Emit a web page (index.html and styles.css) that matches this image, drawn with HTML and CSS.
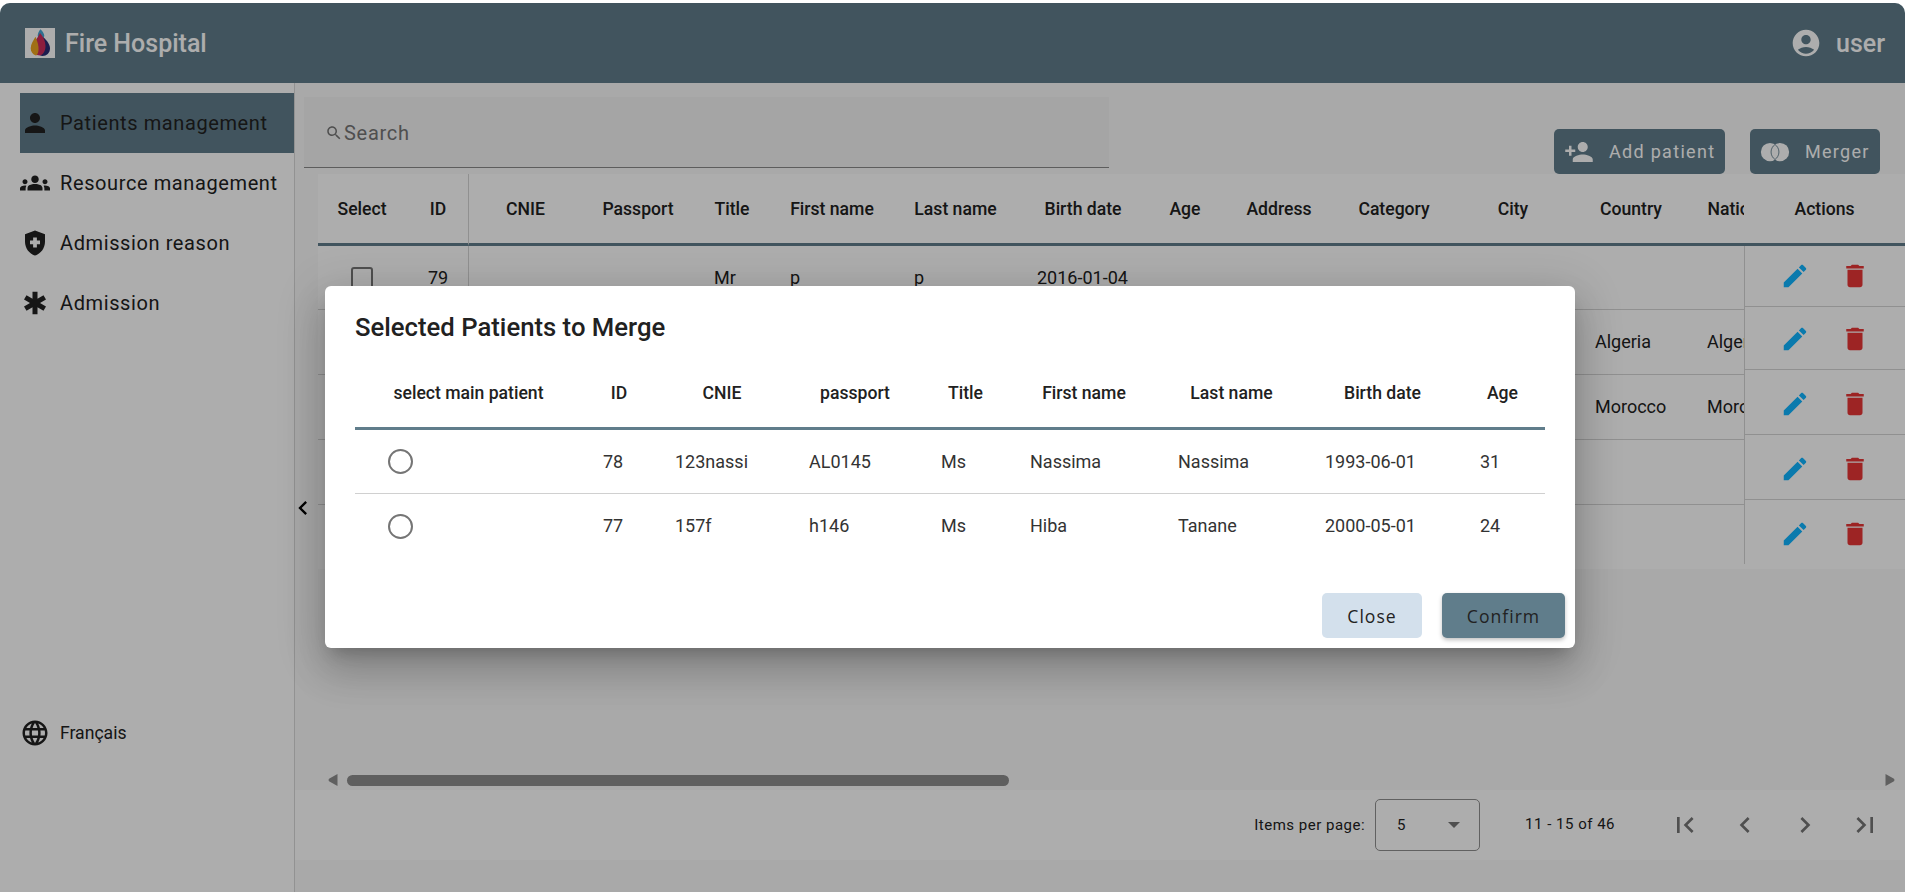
FILE: index.html
```html
<!DOCTYPE html>
<html lang="en">

<head>
  <meta charset="UTF-8">
  <meta name="viewport" content="width=device-width, initial-scale=1.0">
  <title>Fire Hospital</title>
  <link rel="stylesheet" href="styles.css">
</head>

<body>
  <svg class="sprite" aria-hidden="true">
    <symbol id="i-edit" viewBox="0 0 24 24"><path d="M3 17.25V21h3.75L17.81 9.94l-3.75-3.75L3 17.25zM20.71 7.04c.39-.39.39-1.02 0-1.41l-2.34-2.34c-.39-.39-1.02-.39-1.41 0l-1.83 1.83 3.75 3.75 1.83-1.83z"/></symbol>
    <symbol id="i-delete" viewBox="0 0 24 24"><path d="M6 19c0 1.1.9 2 2 2h8c1.1 0 2-.9 2-2V7H6v12zM19 4h-3.5l-1-1h-5l-1 1H5v2h14V4z"/></symbol>
  </svg>

  <div class="app">
    <header class="topbar">
      <div class="brand">
        <svg class="logo" viewBox="0 0 30 30">
          <rect width="30" height="30" fill="#fff"/>
          <path d="M15.500 1.300c2 2 3.800 4.500 3.800 6.500 0 1.500-1.500 2.700-3.300 2.700s-3.300-1.200-3.300-2.700c0-2 1-4.500 2.800-6.500z" fill="#46a5d6"/>
          <path d="M18 9c4 3.500 7 7.500 7 11.500 0 4.500-3.500 7.500-7.500 7.500-2 0-3.500-1-3.500-3z" fill="#2a2c74"/>
          <path d="M15 5c3.500 4 5.500 8.500 5.500 13 0 4.500-2 8.500-5.500 9.500-4 0-7-3-7-7.500 0-5.500 4.500-9.500 7-15z" fill="#cf2c5c"/>
          <path d="M10.500 8.700c1.800 4.500 3.500 9 3 13.500-.3 2.800-1.300 4.800-2.500 5.300-3.300-1-5.300-3.800-5.300-7.200 0-4.300 2.800-7.800 4.800-11.600z" fill="#ecA41f"/>
        </svg>
        <span class="brand-name">Fire Hospital</span>
      </div>
      <div class="user">
        <svg class="user-icon" viewBox="0 0 24 24"><path d="M12 2C6.480 2 2 6.480 2 12s4.480 10 10 10 10-4.480 10-10S17.520 2 12 2zm0 4c1.930 0 3.500 1.570 3.500 3.500S13.930 13 12 13s-3.500-1.570-3.500-3.500S10.070 6 12 6zm0 14c-2.030 0-4.430-.820-6.140-2.880C7.550 15.800 9.680 15 12 15s4.450.800 6.140 2.120C16.430 19.180 14.030 20 12 20z"/></svg>
        <span>user</span>
      </div>
    </header>

    <div class="content">
      <aside class="sidebar">
        <nav class="nav">
          <a class="nav-item active">
            <svg class="nav-icon" viewBox="0 0 24 24"><path d="M12 12c2.210 0 4-1.790 4-4s-1.790-4-4-4-4 1.790-4 4 1.790 4 4 4zm0 2c-2.670 0-8 1.340-8 4v2h16v-2c0-2.660-5.330-4-8-4z"/></svg>
            Patients management
          </a>
          <a class="nav-item">
            <svg class="nav-icon" viewBox="0 0 24 24"><path d="M12 12.750c1.630 0 3.070.390 4.240.900 1.080.480 1.760 1.560 1.760 2.730V18H6v-1.610c0-1.180.680-2.260 1.760-2.730 1.170-.520 2.610-.910 4.240-.910zM4 13c1.100 0 2-.900 2-2s-.900-2-2-2-2 .900-2 2 .900 2 2 2zm1.130 1.100c-.370-.060-.740-.100-1.130-.100-.990 0-1.930.210-2.780.580C.480 14.900 0 15.620 0 16.430V18h4.500v-1.610c0-.830.230-1.610.630-2.290zM20 13c1.100 0 2-.900 2-2s-.900-2-2-2-2 .900-2 2 .900 2 2 2zm4 3.430c0-.810-.480-1.530-1.220-1.850-.850-.370-1.790-.580-2.780-.580-.390 0-.760.040-1.130.100.400.680.630 1.460.630 2.290V18H24v-1.570zM12 12c1.660 0 3-1.340 3-3s-1.340-3-3-3-3 1.340-3 3 1.340 3 3 3z"/></svg>
            Resource management
          </a>
          <a class="nav-item">
            <svg class="nav-icon" viewBox="0 0 24 24"><path fill-rule="evenodd" d="M10.500 13H8v-3h2.500V7.500h3V10H16v3h-2.500v2.500h-3V13zM12 2 4 5v6.090c0 5.050 3.410 9.760 8 10.910 4.590-1.150 8-5.860 8-10.910V5l-8-3z"/></svg>
            Admission reason
          </a>
          <a class="nav-item">
            <svg class="nav-icon" viewBox="0 0 24 24"><path d="M20.790 9.230l-2-3.460L14 8.540V3h-4v5.540L5.210 5.770l-2 3.460L8 12l-4.790 2.770 2 3.460L10 15.460V21h4v-5.540l4.790 2.770 2-3.460L16 12z"/></svg>
            Admission
          </a>
        </nav>
        <a class="lang">
          <svg class="nav-icon" viewBox="0 0 24 24"><path d="M11.990 2C6.470 2 2 6.480 2 12s4.470 10 9.990 10C17.520 22 22 17.520 22 12S17.520 2 11.990 2zm6.930 6h-2.950c-.320-1.250-.780-2.450-1.380-3.560 1.840.630 3.370 1.910 4.330 3.560zM12 4.040c.830 1.200 1.480 2.530 1.910 3.960h-3.820c.430-1.430 1.080-2.760 1.910-3.960zM4.260 14C4.100 13.360 4 12.690 4 12s.100-1.360.260-2h3.380c-.080.660-.140 1.320-.140 2 0 .680.060 1.340.140 2H4.260zm.820 2h2.950c.320 1.250.780 2.450 1.380 3.560-1.840-.630-3.370-1.900-4.330-3.560zm2.950-8H5.080c.960-1.660 2.490-2.930 4.330-3.560C8.810 5.550 8.350 6.750 8.030 8zM12 19.960c-.830-1.200-1.480-2.530-1.910-3.960h3.820c-.430 1.430-1.080 2.760-1.910 3.960zM14.340 14H9.660c-.090-.660-.160-1.320-.160-2 0-.680.070-1.350.160-2h4.680c.090.650.160 1.320.160 2 0 .680-.070 1.340-.160 2zm.250 5.560c.600-1.110 1.060-2.310 1.380-3.560h2.950c-.960 1.650-2.490 2.930-4.330 3.560zM16.360 14c.080-.660.140-1.320.140-2 0-.680-.060-1.340-.140-2h3.380c.160.640.260 1.310.260 2s-.100 1.360-.260 2h-3.380z"/></svg>
          Français
        </a>
      </aside>

      <main class="main">
        <svg class="collapse" viewBox="0 0 24 24"><path d="M15.410 7.410 14 6l-6 6 6 6 1.410-1.410L10.830 12z"/></svg>

        <div class="toolbar">
          <div class="search">
            <svg class="search-icon" viewBox="0 0 24 24"><path d="M15.500 14h-.790l-.280-.270C15.410 12.590 16 11.110 16 9.500 16 5.910 13.090 3 9.500 3S3 5.910 3 9.500 5.910 16 9.500 16c1.610 0 3.090-.590 4.230-1.570l.270.280v.790l5 4.990L20.490 19l-4.990-5zm-6 0C7.010 14 5 11.990 5 9.500S7.010 5 9.500 5 14 7.010 14 9.500 11.990 14 9.500 14z"/></svg>
            <span>Search</span>
          </div>
          <div class="toolbar-actions">
            <button class="btn-add">
              <svg class="btn-icon" viewBox="0 0 24 24"><path d="M15 12c2.210 0 4-1.790 4-4s-1.790-4-4-4-4 1.790-4 4 1.790 4 4 4zm-9-2V7H4v3H1v2h3v3h2v-3h3v-2H6zm9 4c-2.670 0-8 1.340-8 4v2h16v-2c0-2.660-5.330-4-8-4z"/></svg>
              <span>Add patient</span>
            </button>
            <button class="btn-merge">
              <svg class="btn-icon" viewBox="0 0 24 24">
                <circle cx="8" cy="12" r="7.300"/>
                <circle cx="16" cy="12" r="7.300"/>
                <path class="lens" d="M12 6A7.300 7.300 0 0 1 12 18 7.300 7.300 0 0 1 12 6z"/>
              </svg>
              <span>Merger</span>
            </button>
          </div>
        </div>

        <div class="table-area">
          <div class="table-scroll">
            <table class="patients">
              <colgroup>
                <col class="c-select"><col class="c-id"><col class="c-cnie"><col class="c-passport"><col class="c-title">
                <col class="c-first"><col class="c-last"><col class="c-birth"><col class="c-age"><col class="c-address">
                <col class="c-category"><col class="c-city"><col class="c-country"><col class="c-nation">
              </colgroup>
              <thead>
                <tr>
                  <th class="flush">Select</th>
                  <th class="flush id-head sticky-end">ID</th>
                  <th class="cnie-head">CNIE</th>
                  <th>Passport</th>
                  <th>Title</th>
                  <th>First name</th>
                  <th>Last name</th>
                  <th>Birth date</th>
                  <th>Age</th>
                  <th>Address</th>
                  <th>Category</th>
                  <th>City</th>
                  <th>Country</th>
                  <th>Nationality</th>
                </tr>
              </thead>
              <tbody>
                <tr class="first-row">
                  <td class="center"><span class="checkbox"></span></td>
                  <td class="center sticky-end">79</td>
                  <td></td><td></td>
                  <td>Mr</td><td>p</td><td>p</td><td>2016-01-04</td>
                  <td></td><td></td><td></td><td></td><td></td><td></td>
                </tr>
                <tr>
                  <td></td><td class="sticky-end"></td>
                  <td></td><td></td><td></td><td></td><td></td><td></td><td></td><td></td><td></td><td></td>
                  <td>Algeria</td><td>Algerian</td>
                </tr>
                <tr>
                  <td></td><td class="sticky-end"></td>
                  <td></td><td></td><td></td><td></td><td></td><td></td><td></td><td></td><td></td><td></td>
                  <td>Morocco</td><td>Moroccan</td>
                </tr>
                <tr>
                  <td></td><td class="sticky-end"></td>
                  <td></td><td></td><td></td><td></td><td></td><td></td><td></td><td></td><td></td><td></td><td></td><td></td>
                </tr>
                <tr class="last-row">
                  <td></td><td class="sticky-end"></td>
                  <td></td><td></td><td></td><td></td><td></td><td></td><td></td><td></td><td></td><td></td><td></td><td></td>
                </tr>
              </tbody>
            </table>
          </div>

          <div class="actions-col">
            <div class="actions-head">Actions</div>
            <div class="action-row row-a">
              <svg class="act-edit"><use href="#i-edit"/></svg>
              <svg class="act-delete"><use href="#i-delete"/></svg>
            </div>
            <div class="action-row row-b">
              <svg class="act-edit"><use href="#i-edit"/></svg>
              <svg class="act-delete"><use href="#i-delete"/></svg>
            </div>
            <div class="action-row">
              <svg class="act-edit"><use href="#i-edit"/></svg>
              <svg class="act-delete"><use href="#i-delete"/></svg>
            </div>
            <div class="action-row">
              <svg class="act-edit"><use href="#i-edit"/></svg>
              <svg class="act-delete"><use href="#i-delete"/></svg>
            </div>
            <div class="action-row row-last">
              <svg class="act-edit"><use href="#i-edit"/></svg>
              <svg class="act-delete"><use href="#i-delete"/></svg>
            </div>
          </div>
        </div>

        <div class="hscroll">
          <svg class="arrow" viewBox="0 0 10 12"><path d="M9.500 0v12L1 7.200Q0 6 1 4.800z"/></svg>
          <div class="thumb"></div>
          <svg class="arrow arrow-end" viewBox="0 0 10 12"><path d="M.5 0v12L9 7.200Q10 6 9 4.800z"/></svg>
        </div>

        <div class="paginator">
          <span class="per-page">Items per page:</span>
          <div class="page-select"><span>5</span><i class="caret"></i></div>
          <span class="range">11 - 15 of 46</span>
          <svg class="page-btn" viewBox="0 0 24 24"><path d="M18.410 16.590 13.820 12l4.590-4.590L17 6l-6 6 6 6zM6 6h2v12H6z"/></svg>
          <svg class="page-btn" viewBox="0 0 24 24"><path d="M15.410 7.410 14 6l-6 6 6 6 1.410-1.410L10.830 12z"/></svg>
          <svg class="page-btn" viewBox="0 0 24 24"><path d="M10 6 8.590 7.410 13.170 12l-4.580 4.590L10 18l6-6z"/></svg>
          <svg class="page-btn" viewBox="0 0 24 24"><path d="M5.590 7.410 10.180 12l-4.590 4.590L7 18l6-6-6-6zM16 6h2v12h-2z"/></svg>
        </div>
      </main>
    </div>

    <div class="overlay">
      <div class="modal">
        <div class="modal-body">
          <h2 class="modal-title">Selected Patients to Merge</h2>
          <table class="merge-table">
            <colgroup>
              <col class="m-main"><col class="m-id"><col class="m-cnie"><col class="m-passport"><col class="m-title">
              <col class="m-first"><col class="m-last"><col class="m-birth"><col class="m-age">
            </colgroup>
            <thead>
              <tr>
                <th>select main patient</th>
                <th>ID</th>
                <th>CNIE</th>
                <th>passport</th>
                <th>Title</th>
                <th>First name</th>
                <th>Last name</th>
                <th>Birth date</th>
                <th>Age</th>
              </tr>
            </thead>
            <tbody>
              <tr>
                <td class="radio-cell"><span class="radio"></span></td>
                <td>78</td><td>123nassi</td><td>AL0145</td><td>Ms</td><td>Nassima</td><td>Nassima</td><td>1993-06-01</td><td>31</td>
              </tr>
              <tr>
                <td class="radio-cell"><span class="radio"></span></td>
                <td>77</td><td>157f</td><td>h146</td><td>Ms</td><td>Hiba</td><td>Tanane</td><td>2000-05-01</td><td>24</td>
              </tr>
            </tbody>
          </table>
        </div>
        <div class="modal-footer">
          <button class="btn-close">Close</button>
          <button class="btn-confirm">Confirm</button>
        </div>
      </div>
    </div>
  </div>
</body>

</html>
```

FILE: styles.css
```css
* {
  box-sizing: border-box;
}

html,
body {
  height: 100%;
}

body {
  margin: 0;
  padding: 3px 3px 0 0;
  background-color: #fff;
  color: #212121;
  font-family: Roboto, "Liberation Sans", sans-serif;
  overflow: hidden;
}

.sprite {
  display: none;
}

svg {
  fill: currentColor;
  flex-shrink: 0;
}

.app {
  position: relative;
  display: flex;
  flex-direction: column;
  height: 889px;
  overflow: hidden;
  border-radius: 10px 10px 0 0;
  background-color: #fff;
}

/* top bar */
.topbar {
  display: flex;
  align-items: center;
  justify-content: space-between;
  height: 80px;
  padding: 0 20px 0 25px;
  background-color: #607d8b;
  color: #fff;
  font-size: 25px;
  font-weight: 500;
}

.brand {
  display: flex;
  align-items: center;
  gap: 10px;
}

.logo {
  width: 30px;
  height: 30px;
}

.user {
  display: flex;
  align-items: center;
  gap: 14px;
}

.user-icon {
  width: 32px;
  height: 32px;
}

/* side menu */
.content {
  display: flex;
  flex: 1;
  min-height: 0;
}

.sidebar {
  display: flex;
  flex-direction: column;
  width: 295px;
  padding-top: 10px;
  border-right: 1px solid #d8d8d8;
}

.nav-item {
  display: flex;
  align-items: center;
  gap: 10px;
  height: 60px;
  margin-left: 20px;
  font-size: 20px;
  letter-spacing: 0.6px;
}

.nav-item.active {
  background-color: #607d8b;
}

.nav-icon {
  width: 30px;
  height: 30px;
}

.lang {
  display: flex;
  align-items: center;
  gap: 10px;
  margin: auto 0 144px 20px;
  font-size: 17.6px;
}

/* main area */
.main {
  position: relative;
  display: flex;
  flex: 1;
  flex-direction: column;
  min-width: 0;
  background-color: #fafafa;
}

.collapse {
  position: absolute;
  left: -6px;
  top: 411px;
  width: 28px;
  height: 28px;
  color: #000;
}

.toolbar {
  display: flex;
  justify-content: space-between;
  height: 91px;
  padding-left: 9px;
}

.search {
  display: flex;
  align-items: center;
  width: 805px;
  height: 71px;
  margin-top: 14px;
  padding: 2px 0 0 21px;
  background-color: #f3f3f3;
  border-bottom: 1px solid #8a8a8a;
  color: #757575;
  font-size: 20px;
  letter-spacing: 0.7px;
}

.search-icon {
  width: 18px;
  height: 18px;
  margin-right: 1px;
}

.toolbar-actions {
  display: flex;
  gap: 25px;
  margin-top: 46px;
  padding-right: 25px;
}

.toolbar-actions button {
  display: flex;
  align-items: center;
  height: 45px;
  padding: 0 10px;
  gap: 15px;
  border: none;
  border-radius: 5px;
  background-color: #607d8b;
  color: #fff;
  font-family: Roboto, sans-serif;
  font-size: 18px;
  letter-spacing: 1.3px;
  white-space: nowrap;
}

.btn-add {
  width: 171px;
}

.btn-merge {
  width: 130px;
}

.btn-icon {
  width: 30px;
  height: 30px;
}

.lens {
  fill: #fff;
  stroke: #607d8b;
  stroke-width: 0.7;
}

/* patients table */
.table-area {
  display: flex;
  height: 395px;
  margin-left: 23px;
  overflow: hidden;
  background-color: #fff;
}

.table-scroll {
  width: 1426px;
  overflow: hidden;
}

table {
  border-collapse: separate;
  border-spacing: 0;
  table-layout: fixed;
}

.patients {
  width: 1499px;
  font-size: 18px;
}

.c-select { width: 88px; }
.c-id { width: 63px; }
.c-cnie { width: 117px; }
.c-passport { width: 112px; }
.c-title { width: 76px; }
.c-first { width: 124px; }
.c-last { width: 123px; }
.c-birth { width: 132px; }
.c-age { width: 72px; }
.c-address { width: 116px; }
.c-category { width: 114px; }
.c-city { width: 124px; }
.c-country { width: 112px; }
.c-nation { width: 126px; }

.patients th {
  height: 72px;
  padding: 0 8px 0 0;
  border-bottom: 3px solid #607d8b;
  font-size: 17.6px;
  font-weight: 500;
  text-align: center;
  white-space: nowrap;
}

.patients th.flush {
  padding-right: 0;
}

.patients th.id-head {
  padding-left: 2px;
}

.patients th.cnie-head {
  padding-right: 4px;
}

.patients td {
  height: 65px;
  padding: 0 0 2px 16px;
  border-bottom: 1px solid #d4d4d4;
  white-space: nowrap;
  overflow: hidden;
}

.patients .first-row td {
  height: 64px;
  padding-bottom: 0;
}

.patients .last-row td {
  height: 64px;
  border-bottom: none;
}

.patients td.center {
  padding: 0 0 0 2px;
  text-align: center;
}

.sticky-end {
  border-right: 1px solid #d4d4d4;
}

.checkbox {
  display: inline-block;
  width: 22px;
  height: 22px;
  margin-left: -2px;
  border: 2px solid #757575;
  border-radius: 3px;
  vertical-align: middle;
}

.actions-col {
  width: 161px;
}

.actions-head {
  display: flex;
  align-items: center;
  justify-content: center;
  height: 72px;
  border-bottom: 3px solid #607d8b;
  font-size: 17.6px;
  font-weight: 500;
}

.action-row {
  display: flex;
  justify-content: center;
  gap: 30px;
  height: 65px;
  padding-top: 19px;
  border-left: 1px solid #d4d4d4;
  border-bottom: 1px solid #d4d4d4;
}

.action-row.row-a {
  height: 61px;
  padding-top: 15px;
}

.action-row.row-b {
  height: 63px;
  padding-top: 17px;
}

.action-row.row-last {
  height: 64px;
  border-bottom: none;
}

.act-edit,
.act-delete {
  width: 30px;
  height: 30px;
}

.act-edit {
  color: #10b4ff;
}

.act-delete {
  color: #e83535;
}

/* scrollbar + paginator */
.hscroll {
  display: flex;
  align-items: center;
  height: 20px;
  margin-top: auto;
  padding: 0 10px 0 33px;
  color: #8c8c8c;
}

.arrow {
  width: 10px;
  height: 12px;
}

.arrow-end {
  margin-left: auto;
}

.thumb {
  width: 662px;
  height: 11px;
  margin-left: 9px;
  border-radius: 6px;
  background-color: #8c8c8c;
}

.paginator {
  display: flex;
  align-items: center;
  height: 70px;
  margin-bottom: 32px;
  padding-right: 24px;
  justify-content: flex-end;
  background-color: #fff;
  font-size: 15px;
}

.per-page {
  letter-spacing: 0.5px;
}

.page-select {
  display: flex;
  align-items: center;
  justify-content: space-between;
  width: 105px;
  height: 52px;
  margin: 0 45px 0 10px;
  padding: 0 19px 0 21px;
  border: 1px solid #8f8f8f;
  border-radius: 5px;
}

.caret {
  width: 0;
  height: 0;
  border-left: 6.500px solid transparent;
  border-right: 6.500px solid transparent;
  border-top: 6.500px solid #757575;
}

.range {
  margin: -3px 26px 0 0;
  letter-spacing: 0.5px;
}

.page-btn {
  width: 32px;
  height: 32px;
  margin-left: 28px;
  color: #757575;
}

/* dialog */
.overlay {
  position: absolute;
  inset: 0;
  background-color: rgba(0, 0, 0, 0.32);
}

.modal {
  width: 1250px;
  margin: 283px 0 0 325px;
  border-radius: 6px;
  background-color: #fff;
  box-shadow: 0 11px 15px -7px rgba(0, 0, 0, 0.2), 0 24px 38px 3px rgba(0, 0, 0, 0.14), 0 9px 46px 8px rgba(0, 0, 0, 0.12);
}

.modal-body {
  padding: 26px 30px 0 30px;
}

.modal-title {
  margin: 0 0 16px;
  font-size: 25.7px;
  font-weight: 500;
  line-height: 30px;
}

.merge-table {
  width: 1190px;
  font-size: 18px;
}

.m-main { width: 232px; }
.m-id { width: 72px; }
.m-cnie { width: 134px; }
.m-passport { width: 132px; }
.m-title { width: 89px; }
.m-first { width: 148px; }
.m-last { width: 147px; }
.m-birth { width: 155px; }
.m-age { width: 81px; }

.merge-table th {
  height: 72px;
  padding: 0 8px 0 0;
  border-bottom: 3px solid #607d8b;
  font-size: 17.6px;
  font-weight: 500;
  text-align: center;
  white-space: nowrap;
}

.merge-table th:first-child {
  padding-right: 5px;
}

.merge-table th:last-child {
  padding-right: 4px;
}

.merge-table td {
  height: 64px;
  padding: 0 0 0 16px;
  border-bottom: 1px solid #d0d0d0;
  color: #333;
}

.merge-table tr:last-child td {
  padding-bottom: 2px;
  border-bottom: none;
}

.merge-table td.radio-cell,
.merge-table tr:last-child td.radio-cell {
  padding: 0 0 0 33px;
}

.radio {
  display: block;
  width: 25px;
  height: 25px;
  border: 2px solid #757575;
  border-radius: 50%;
}

.modal-footer {
  display: flex;
  justify-content: flex-end;
  gap: 20px;
  padding: 35px 10px 10px 0;
}

.modal-footer button {
  height: 45px;
  border: none;
  border-radius: 5px;
  color: #222;
  font-family: "Open Sans", sans-serif;
  font-size: 17.6px;
  letter-spacing: 1px;
}

.btn-close {
  width: 100px;
  background-color: #d3e0ec;
}

.btn-confirm {
  width: 123px;
  background-color: #607d8b;
  box-shadow: 0 2px 4px rgba(0, 0, 0, 0.25);
}
```
